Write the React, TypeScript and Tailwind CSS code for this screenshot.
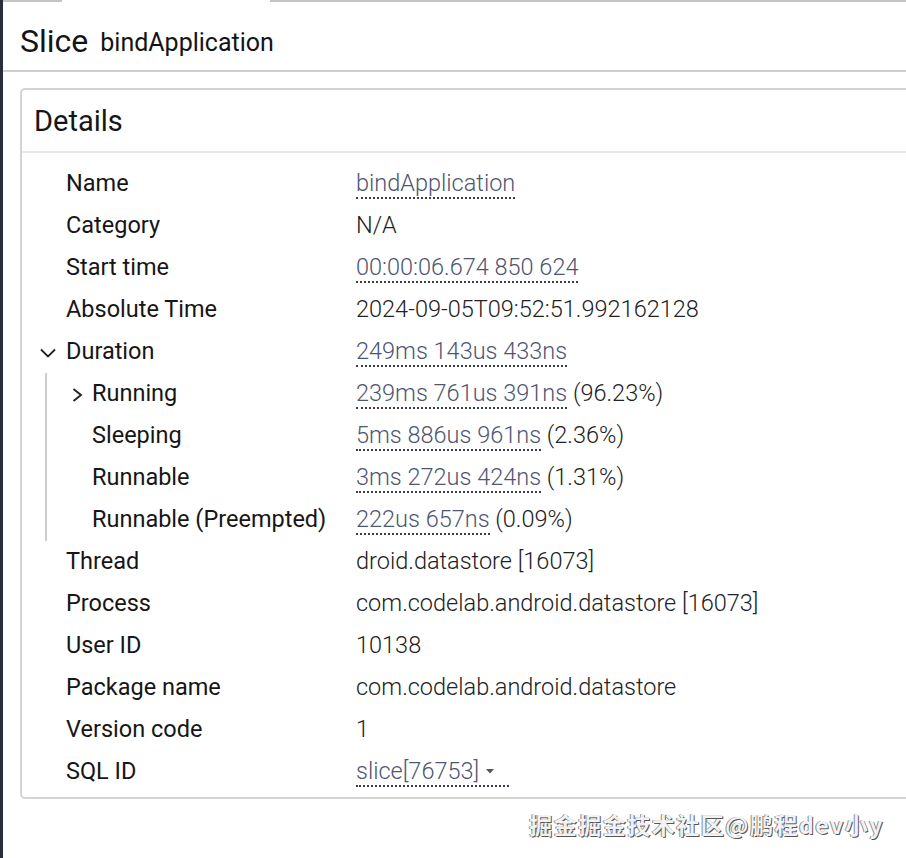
import React from 'react'

interface Row {
  label: string
  value?: string
  link?: string
  extra?: string
  chevron?: 'down' | 'right'
  dropdown?: boolean
}

const topRows: Row[] = [
  { label: 'Name', link: 'bindApplication' },
  { label: 'Category', value: 'N/A' },
  { label: 'Start time', link: '00:00:06.674 850 624' },
  { label: 'Absolute Time', value: '2024-09-05T09:52:51.992162128' },
]

const durationRows: Row[] = [
  { label: 'Running', link: '239ms 761us 391ns', extra: ' (96.23%)', chevron: 'right' },
  { label: 'Sleeping', link: '5ms 886us 961ns', extra: ' (2.36%)' },
  { label: 'Runnable', link: '3ms 272us 424ns', extra: ' (1.31%)' },
  { label: 'Runnable (Preempted)', link: '222us 657ns', extra: ' (0.09%)' },
]

const bottomRows: Row[] = [
  { label: 'Thread', value: 'droid.datastore [16073]' },
  { label: 'Process', value: 'com.codelab.android.datastore [16073]' },
  { label: 'User ID', value: '10138' },
  { label: 'Package name', value: 'com.codelab.android.datastore' },
  { label: 'Version code', value: '1' },
  { label: 'SQL ID', link: 'slice[76753]', dropdown: true },
]

function ChevronDown() {
  return (
    <svg width="16" height="10" viewBox="0 0 16 10" className="text-[#222]">
      <polyline points="1,1.5 8,8.5 15,1.5" fill="none" stroke="currentColor" strokeWidth="1.8" />
    </svg>
  )
}

function ChevronRight() {
  return (
    <svg width="11" height="14" viewBox="0 0 11 14" className="text-[#222]">
      <polyline points="1.5,1 9,7 1.5,13" fill="none" stroke="currentColor" strokeWidth="1.9" />
    </svg>
  )
}

function Value({ row }: { row: Row }) {
  if (row.link) {
    return (
      <span className="flex items-center">
        <span className="flex items-center border-b-2 border-dotted border-[#3c3f4a] leading-[27px] text-[#4e5672]">
          {row.link}
          {row.dropdown && (
            <svg width="28" height="10" viewBox="0 0 28 10" className="ml-[2px]">
              <polygon points="5,3 13,3 9,7.5" fill="#4e5672" />
            </svg>
          )}
        </span>
        {row.extra && <span className="whitespace-pre text-[#222]">{row.extra}</span>}
      </span>
    )
  }
  return <span className="text-[#222]">{row.value}</span>
}

// label column ends at x=356 regardless of nesting
function DetailRow({ row, indent }: { row: Row; indent: number }) {
  return (
    <div className="flex h-[42px] items-center">
      <div className="flex shrink-0 items-center" style={{ width: 334 - indent }}>
        {row.chevron === 'right' ? (
          <span className="flex w-[44px] justify-end pr-[9px] pt-[2px]">
            <ChevronRight />
          </span>
        ) : (
          <span className="w-[44px]" />
        )}
        <span className="text-[#161616]">{row.label}</span>
      </div>
      <div className="font-light">
        <Value row={row} />
      </div>
    </div>
  )
}

export default function App() {
  return (
    <div className="flex h-[858px] w-[906px] overflow-hidden bg-white font-['Roboto',sans-serif]">
      <div className="w-[3px] shrink-0 bg-[#2b2d3a]" />
      <div className="relative flex min-w-0 flex-1 flex-col">
        <div className="flex h-[2px] shrink-0">
          <div className="w-[59px] bg-[#c4c4c4]" />
          <div className="w-[208px] bg-white" />
          <div className="flex-1 bg-[#c4c4c4]" />
        </div>

        <div className="flex h-[70px] shrink-0 items-center gap-[12px] border-b-2 border-[#cfcfcf] pl-[17px] pt-[10px]">
          <span className="text-[32px] leading-none text-[#141414]">Slice</span>
          <span className="pt-[3px] text-[25px] leading-none text-[#141414]">bindApplication</span>
        </div>

        <div className="ml-[17px] mr-[-8px] mt-[16px] rounded-[5px] border-2 border-[#d3d3d3]">
          <div className="flex h-[63px] items-center border-b-2 border-[#e6e6e6] pl-[12px] pt-[2px]">
            <span className="text-[29px] leading-none text-[#161616]">Details</span>
          </div>

          <div className="pb-[4px] pt-[10px] text-[23.5px]">
            {topRows.map((r) => (
              <DetailRow key={r.label} row={r} indent={0} />
            ))}

            <div className="flex h-[42px] items-center">
              <div className="flex w-[334px] shrink-0 items-center">
                <span className="flex w-[44px] justify-start pl-[18px] pt-[1px]">
                  <ChevronDown />
                </span>
                <span className="text-[#161616]">Duration</span>
              </div>
              <div className="font-light">
                <Value row={{ label: 'Duration', link: '249ms 143us 433ns' }} />
              </div>
            </div>

            <div className="ml-[23px] border-l-2 border-[#cccccc]">
              <div className="ml-[1px]">
                {durationRows.map((r) => (
                  <DetailRow key={r.label} row={r} indent={26} />
                ))}
              </div>
            </div>

            {bottomRows.map((r) => (
              <DetailRow key={r.label} row={r} indent={0} />
            ))}
          </div>
        </div>

        <div className="flex flex-1 justify-end pr-[22px] pt-[8px]">
          <span className="font-['Noto_Sans_CJK_SC',sans-serif] text-[23px] font-bold tracking-[1.5px] text-[#f2f2f2] [text-shadow:1px_1px_0_#555,-1px_0_0_#888]">
            掘金掘金技术社区@鹏程dev小y
          </span>
        </div>
      </div>
    </div>
  )
}
